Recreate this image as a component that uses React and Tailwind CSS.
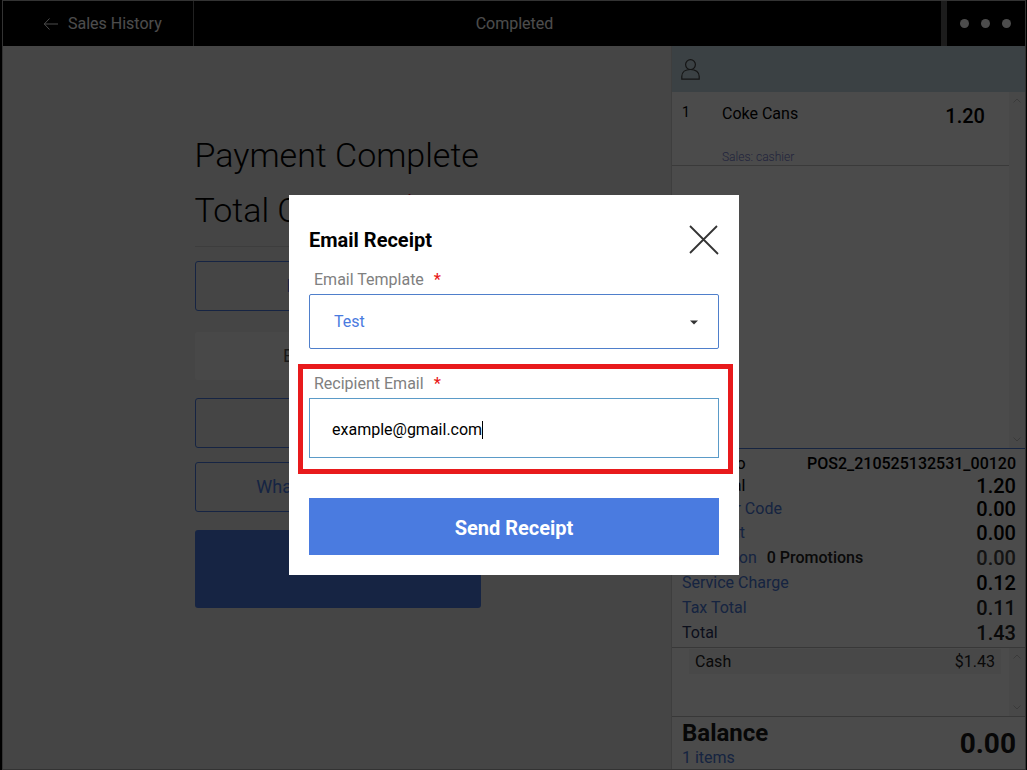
import React, { useState } from 'react';

const totals = [
  { label: 'Order No', value: 'POS2_210525132531_00120', row: 'h-[23px]', tone: 'text-black', amount: 'text-base text-black' },
  { label: 'Sub total', value: '1.20', row: 'h-[22px]', tone: 'text-black', amount: 'text-xl text-black' },
  { label: 'Voucher Code', value: '0.00', row: 'h-6', tone: 'text-[#4a78d8]', amount: 'text-xl text-black' },
  { label: 'Discount', value: '0.00', row: 'h-6', tone: 'text-[#4a78d8]', amount: 'text-xl text-black' },
  { label: 'Promotion', note: '0 Promotions', value: '0.00', row: 'h-[25px]', tone: 'text-[#4a78d8]', amount: 'text-xl text-[#444444]' },
  { label: 'Service Charge', value: '0.12', row: 'h-[25px]', tone: 'text-[#4a78d8]', amount: 'text-xl text-black' },
  { label: 'Tax Total', value: '0.11', row: 'h-[25px]', tone: 'text-[#4a78d8]', amount: 'text-xl text-[#222222]' },
  { label: 'Total', value: '1.43', row: 'h-[25px]', tone: 'text-[#2a3560]', amount: 'text-xl text-[#222222]' },
];

function Chevron({ up }) {
  return (
    <svg width="8" height="5" viewBox="0 0 8 5" fill="none" stroke="#c4c4c4" strokeWidth="1" aria-hidden="true">
      <path d={up ? 'M0.5 4.5 4 1 7.5 4.5' : 'M0.5 0.5 4 4 7.5 0.5'} />
    </svg>
  );
}

function Rail() {
  return (
    <div className="flex w-4 shrink-0 flex-col items-center justify-between bg-[#f2f2f2] py-1.5">
      <Chevron up />
      <Chevron />
    </div>
  );
}

function TopBar() {
  return (
    <header className="flex h-[46px] shrink-0 border-t border-[#aaaaaa] bg-black text-base text-white">
      <a href="#history" className="flex w-[191px] items-center gap-2.5 border-r border-[#707070] pl-10">
        <svg width="15" height="12" viewBox="0 0 15 12" fill="none" stroke="currentColor" strokeWidth="1" aria-hidden="true">
          <path d="M6.5 0.5 1.3 6 6.5 11.5M1.3 6H15" />
        </svg>
        Sales History
      </a>
      <h1 className="flex flex-1 items-center justify-center pr-[106px]">Completed</h1>
      <button type="button" aria-label="More" className="flex w-[84px] items-center gap-3 border-l-6 border-[#606060] pl-[13px]">
        <span className="size-[9px] rounded-full bg-white" />
        <span className="size-[9px] rounded-full bg-white" />
        <span className="size-[9px] rounded-full bg-white" />
      </button>
    </header>
  );
}

function PaymentPanel() {
  const outline = 'h-[50px] w-full rounded-[3px] border border-[#4a7be0] text-lg text-[#4a7be0]';
  return (
    <main className="flex flex-1 flex-col items-center bg-[#e6e6e6] pt-[82px] pl-px">
      <div className="w-[286px]">
        <h2 className="text-[34px] leading-[55px] font-light whitespace-nowrap text-black">Payment Complete</h2>
        <p className="border-b border-[#cccccc] pb-2 text-[34px] leading-[55px] font-light whitespace-nowrap text-black">
          Total Change <span className="text-[#d01030]">$0</span>
        </p>
        <div className="mt-3.5 flex flex-col">
          <button type="button" className={outline}>Print Receipt</button>
          <button type="button" className="mt-[21px] h-12 w-full rounded-[3px] bg-[#f2f2f2] text-lg text-[#555555]">Email Receipt</button>
          <button type="button" className={outline + ' mt-[18px]'}>Refund</button>
          <button type="button" className={outline + ' mt-3.5'}>WhatsApp E-Receipt</button>
          <button type="button" className="mt-[18px] h-[78px] w-full rounded-[3px] bg-[#4a7be0] text-lg text-white">Done</button>
        </div>
      </div>
    </main>
  );
}

function OrderPanel() {
  return (
    <aside className="flex w-[354px] shrink-0 flex-col border-l border-[#cfcfcf] bg-[#fafafa]">
      <div className="flex h-[46px] shrink-0 items-center bg-[#c5d9e3] pl-[9px]">
        <svg width="19" height="21" viewBox="0 0 19 21" fill="none" stroke="#444444" strokeWidth="1.2" aria-hidden="true">
          <circle cx="9.5" cy="5.6" r="4.9" />
          <path d="M0.8 20.2V17.5C0.8 13 4.5 10.5 9.5 10.5S18.2 13 18.2 17.5V20.2Z" />
        </svg>
      </div>
      <div className="flex flex-1">
        <div className="flex-1">
          <div className="flex h-[74px] border-b border-[#c4c4c4] pr-6 pl-2.5 text-black">
            <span className="w-10 pt-2.5 text-sm">1</span>
            <div className="flex flex-1 flex-col justify-between pt-2.5">
              <span className="text-base leading-6">Coke Cans</span>
              <span className="text-xs leading-4 font-light text-[#7078cc]">Sales: cashier</span>
            </div>
            <span className="pt-2.5 text-xl font-medium">1.20</span>
          </div>
        </div>
        <Rail />
      </div>
      <dl className="border-t border-[#4a78d8] pt-[3px] pb-0.5">
        {totals.map((t) => (
          <div key={t.label} className={'flex items-center justify-between pr-[9px] pl-2.5 ' + t.row}>
            <dt className={'flex gap-2.5 text-base ' + t.tone}>
              {t.label}
              {t.note && <span className="font-medium text-[#222222]">{t.note}</span>}
            </dt>
            <dd className={'font-medium ' + t.amount}>{t.value}</dd>
          </div>
        ))}
      </dl>
      <div className="flex h-[69px] shrink-0 border-t border-[#bbbbbb]">
        <div className="flex-1 pt-px pr-2 pl-[17px]">
          <div className="flex h-[25px] items-center justify-between bg-[#f0f0f0] px-1.5 text-base text-[#222222]">
            <span>Cash</span>
            <span>$1.43</span>
          </div>
        </div>
        <Rail />
      </div>
      <div className="flex h-[53px] shrink-0 items-center justify-between border-t border-[#bbbbbb] pt-0.5 pr-[9px] pl-2.5">
        <div className="pt-px">
          <div className="text-2xl leading-[26px] font-bold text-[#181818]">Balance</div>
          <div className="text-base leading-[23px] text-[#4a78d8]">1 items</div>
        </div>
        <div className="text-[28px] font-bold text-[#181818]">0.00</div>
      </div>
    </aside>
  );
}

function EmailDialog() {
  const [email, setEmail] = useState('example@gmail.com');
  const label = 'flex h-[22px] items-center gap-2.5 pt-0.5 pl-[5px] text-base text-[#808080]';
  return (
    <div className="fixed inset-0 flex items-center justify-center bg-black/70 pl-px">
      <form
        role="dialog"
        aria-labelledby="dialog-title"
        onSubmit={(e) => e.preventDefault()}
        className="flex w-[450px] flex-col bg-white px-5 pt-[25px] pb-5"
      >
        <div className="flex h-10 items-center justify-between">
          <h2 id="dialog-title" className="text-xl font-bold text-black">Email Receipt</h2>
          <button type="button" aria-label="Close">
            <svg width="30" height="30" viewBox="0 0 30 30" fill="none" stroke="#333333" strokeWidth="1.8" aria-hidden="true">
              <path d="M1 1 29 29M28 1 1 28" />
            </svg>
          </button>
        </div>
        <label htmlFor="template" className={label + ' mt-2'}>
          Email Template <span className="font-medium text-[#e81a1c]">*</span>
        </label>
        <div className="relative mt-1">
          <select id="template" className="h-[55px] w-full appearance-none rounded-[2px] border border-[#4f7fcb] bg-white pl-6 text-base text-[#4a7be0] outline-none">
            <option>Test</option>
          </select>
          <svg className="pointer-events-none absolute top-[26px] right-[21px]" width="8" height="5" viewBox="0 0 8 5" aria-hidden="true">
            <path d="M0 0.5H8L4 4.5Z" fill="#333333" />
          </svg>
        </div>
        <div className="mt-[15px] -mr-3.5 -ml-[11px] border-5 border-[#e81a1c] pt-[3px] pr-[9px] pb-[11px] pl-1.5">
          <label htmlFor="recipient" className={label}>
            Recipient Email <span className="font-medium text-[#e81a1c]">*</span>
          </label>
          <div className="mt-1 flex h-[60px] items-center border border-[#5b9bc8] px-[22px] pt-[3px]">
            <input
              id="recipient"
              type="email"
              value={email}
              onChange={(e) => setEmail(e.target.value)}
              className="max-w-full text-base text-black caret-transparent outline-none [field-sizing:content]"
            />
            <span className="h-[18px] w-px bg-black" />
          </div>
        </div>
        <button type="submit" className="mt-6 h-[57px] bg-[#4a7be0] pt-0.5 text-xl font-bold text-white">Send Receipt</button>
      </form>
    </div>
  );
}

export default function App() {
  return (
    <div className="flex min-h-screen flex-col border-r border-l-2 border-black bg-[#e6e6e6] [font-family:Roboto,'Liberation_Sans',sans-serif]">
      <div className="flex flex-1 flex-col border-x border-b border-[#aaaaaa]">
        <TopBar />
        <div className="flex flex-1">
          <PaymentPanel />
          <OrderPanel />
        </div>
      </div>
      <EmailDialog />
    </div>
  );
}
